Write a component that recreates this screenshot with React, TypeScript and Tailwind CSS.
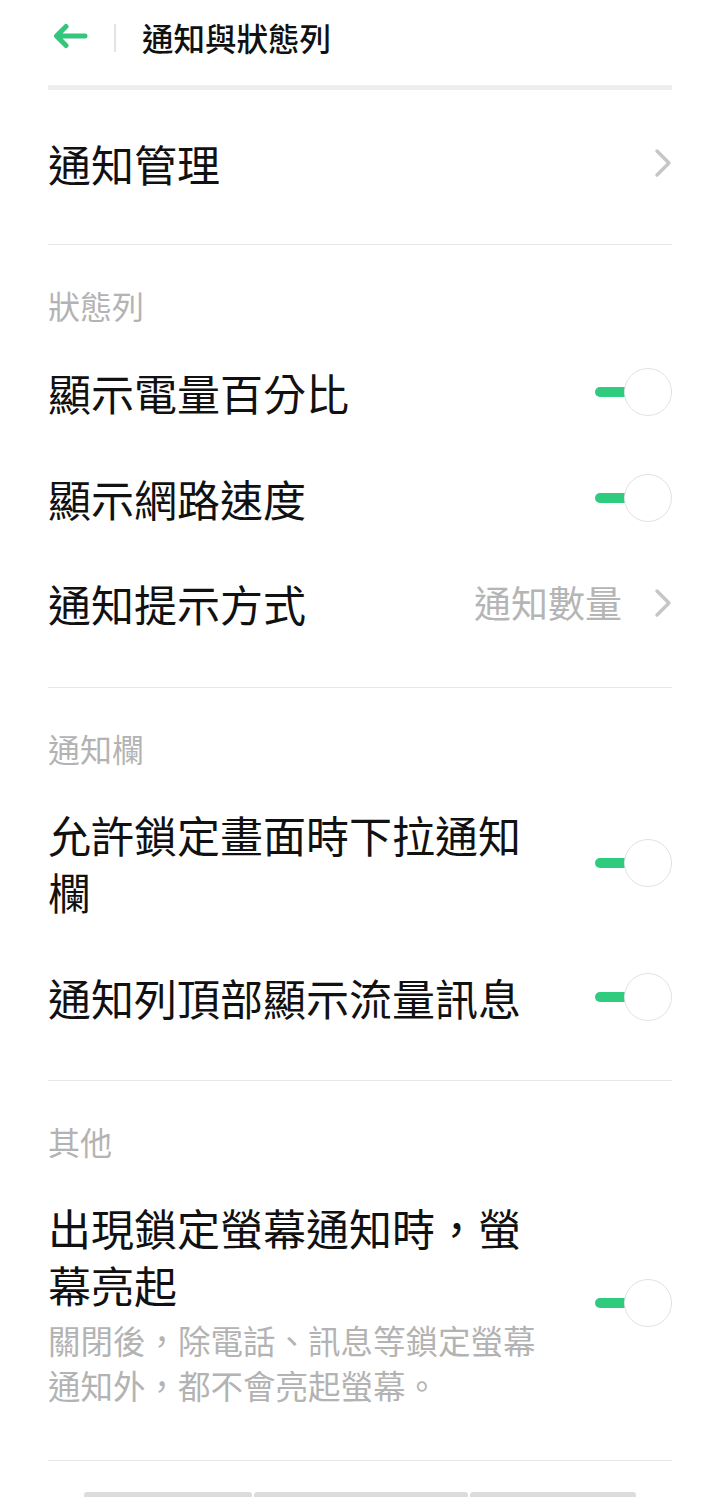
import React, { useState } from 'react';

const FONT = { fontFamily: '"Noto Sans CJK TC", "Noto Sans", sans-serif' };

const Toggle: React.FC<{ on: boolean; onClick: () => void }> = ({ on, onClick }) => (
  <button className="relative w-[77px] h-[48px] shrink-0" onClick={onClick}>
    <span
      className={`absolute left-0 top-[19px] h-[10px] w-[40px] rounded-full ${on ? 'bg-[#2fcb7f]' : 'bg-[#d6d6d6]'}`}
    />
    <span className="absolute right-0 top-0 w-[48px] h-[48px] rounded-full bg-white border-[1.5px] border-[#e2e2e2]" />
  </button>
);

const Chevron: React.FC = () => (
  <svg width="18" height="30" viewBox="0 0 18 30" className="shrink-0">
    <path d="M3 3 L15 15 L3 27" fill="none" stroke="#c6c6c6" strokeWidth="3.5" strokeLinecap="round" strokeLinejoin="round" />
  </svg>
);

const SectionTitle: React.FC<{ children: React.ReactNode }> = ({ children }) => (
  <div className="h-[95px] pt-[38px] text-[32px] leading-[44px] text-[#b3b3b3]">{children}</div>
);

const Row: React.FC<{ title: string; sub?: string; right: React.ReactNode }> = ({ title, sub, right }) => (
  <div className="flex items-center justify-between min-h-[106px] pt-[23px] pb-[25px]">
    <div className="w-[500px]">
      <div className="text-[43px] leading-[57px] text-[#111]">{title}</div>
      {sub && <div className="mt-[4px] text-[32.5px] leading-[45px] text-[#b3b3b3]">{sub}</div>}
    </div>
    {right}
  </div>
);

const App: React.FC = () => {
  const [toggles, setToggles] = useState([true, true, true, true, true]);
  const flip = (i: number) => setToggles(toggles.map((t, j) => (j === i ? !t : t)));

  return (
    <div className="w-[720px] h-[1497px] overflow-hidden bg-white" style={FONT}>
      {/* Header */}
      <div className="h-[76px] flex items-center pl-[52px]">
        <svg width="36" height="26" viewBox="0 0 36 26" className="-mt-[4px]">
          <path d="M33 13 H5 M14 3.5 L4.5 13 L14 22.5" fill="none" stroke="#33c77c" strokeWidth="5" strokeLinecap="round" strokeLinejoin="round" />
        </svg>
        <div className="ml-[26px] w-[2px] h-[28px] bg-[#e4e4e4]" />
        <h1 className="ml-[26px] text-[31.5px] font-medium text-[#111] leading-none">通知與狀態列</h1>
      </div>
      <div className="mt-[9px] mx-[48px] h-[5px] bg-[#eeeeee]" />

      <div className="px-[48px]">
        {/* 通知管理 */}
        <div className="h-[154px] pb-[8px] flex items-center justify-between">
          <span className="text-[43px] leading-[57px] text-[#111]">通知管理</span>
          <Chevron />
        </div>
        <div className="h-px bg-[#e6e6e6]" />

        {/* 狀態列 */}
        <SectionTitle>狀態列</SectionTitle>
        <Row title="顯示電量百分比" right={<Toggle on={toggles[0]} onClick={() => flip(0)} />} />
        <Row title="顯示網路速度" right={<Toggle on={toggles[1]} onClick={() => flip(1)} />} />
        <div className="flex items-center justify-between h-[106px] pb-[4px]">
          <span className="text-[43px] leading-[57px] text-[#111]">通知提示方式</span>
          <div className="flex items-center gap-[32px]">
            <span className="text-[37px] text-[#b5b5b5]">通知數量</span>
            <Chevron />
          </div>
        </div>
        <div className="mt-[29px] h-px bg-[#e6e6e6]" />

        {/* 通知欄 */}
        <SectionTitle>通知欄</SectionTitle>
        <Row title="允許鎖定畫面時下拉通知欄" right={<Toggle on={toggles[2]} onClick={() => flip(2)} />} />
        <Row title="通知列頂部顯示流量訊息" right={<Toggle on={toggles[3]} onClick={() => flip(3)} />} />
        <div className="mt-[29px] h-px bg-[#e6e6e6]" />

        {/* 其他 */}
        <SectionTitle>其他</SectionTitle>
        <Row
          title="出現鎖定螢幕通知時，螢幕亮起"
          sub="關閉後，除電話、訊息等鎖定螢幕通知外，都不會亮起螢幕。"
          right={<Toggle on={toggles[4]} onClick={() => flip(4)} />}
        />
        <div className="mt-[28px] h-px bg-[#e6e6e6]" />
      </div>

      {/* Bottom buttons peeking */}
      <div className="mt-[31px] flex gap-[2px] pl-[84px]">
        <div className="w-[168px] h-[12px] rounded-t-[3px] bg-[#dcdcdc]" />
        <div className="w-[214px] h-[12px] rounded-t-[3px] bg-[#dcdcdc]" />
        <div className="w-[166px] h-[12px] rounded-t-[3px] bg-[#dcdcdc]" />
      </div>
    </div>
  );
};

export default App;
